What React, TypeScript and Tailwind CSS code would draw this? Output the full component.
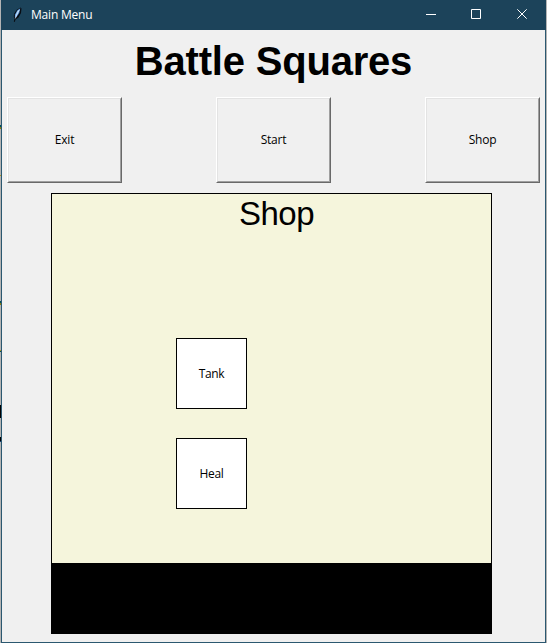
function Feather() {
  return (
    <svg width="9" height="16" viewBox="0 0 9 16" className="block">
      <path d="M7.5 .5 8.5 1.5 8 6 5.5 10.5 2.5 12.5 1.8 15 .8 14.5 1.5 12 .8 10 1 7 3.5 3Z" fill="#080c12" />
      <path d="M7.3 1.3 4.5 3.2 2 7.2 1.8 10.8 3.5 10 6.3 6Z" fill="#4d89ce" />
      <path d="M6.8 1.7 4.3 4.2 2.5 8 2.3 10.2 4.2 7Z" fill="#a9d2fa" />
      <path d="M6.3 3 4.2 7.2 2.2 11.5" fill="none" stroke="#e8f4ff" strokeWidth=".7" />
    </svg>
  );
}

function MenuButton({ label }: { label: string }) {
  return (
    <button className="h-[86px] w-[115px] border border-t-white border-l-white border-r-[#696969] border-b-[#696969]">
      <span className="flex h-full w-full items-center justify-center border border-t-[#e3e3e3] border-l-[#e3e3e3] border-r-[#a0a0a0] border-b-[#a0a0a0] tracking-[-0.2px]">
        {label}
      </span>
    </button>
  );
}

function ShopItem({ label }: { label: string }) {
  return (
    <button className="flex h-[71px] w-[71px] items-center justify-center border border-black bg-white tracking-[-0.3px]">
      {label}
    </button>
  );
}

function EdgeStrip() {
  return (
    <div className="h-full w-px shrink-0 bg-[#b4b4b4]">
      <div className="h-[125px]" />
      <div className="h-[2px] bg-[#00505a]" />
      <div className="h-[2px] bg-[#8a7a10]" />
      <div className="h-[46px]" />
      <div className="h-px bg-[#b09a20]" />
      <div className="h-[125px]" />
      <div className="h-[2px] bg-[#00505a]" />
      <div className="h-[2px] bg-[#8a7a10]" />
      <div className="h-[45px]" />
      <div className="h-px bg-[#b09a20]" />
      <div className="h-px bg-[#00505a]" />
      <div className="h-[53px]" />
      <div className="h-[13px] bg-black" />
      <div className="h-[19px]" />
      <div className="h-[4px] bg-black" />
      <div className="h-px bg-[#103c70]" />
    </div>
  );
}

export default function App() {
  return (
    <div className="flex h-[643px] w-[547px] overflow-hidden bg-[#b4b4b4] font-['Open_Sans','Noto_Sans',sans-serif] text-[12px] leading-4 text-black">
      <EdgeStrip />
      <div className="flex w-[545px] flex-col border-x border-b border-[#2b5870] bg-[#f0f0f0]">
        <header className="-mx-px flex h-[30px] shrink-0 items-center bg-[#1c435a] text-white">
          <div className="ml-[12px] w-[9px]"><Feather /></div>
          <span className="ml-[9px] tracking-[-0.2px]">Main Menu</span>
          <svg className="mr-[19px] mb-[2px] ml-auto" width="101" height="10" viewBox="0 0 101 10" fill="none" stroke="white">
            <path d="M0 5.5H10M45.5 .5H54.5V9.5H45.5ZM91.3 .3 100.7 9.7M100.7 .3 91.3 9.7" />
          </svg>
        </header>
        <h1 className="h-[67px] pt-[8px] text-center font-['Liberation_Sans',Arial,sans-serif] text-[40px] leading-[46px] font-bold tracking-[-0.2px]">
          Battle Squares
        </h1>
        <div className="flex justify-between px-[5px]">
          <MenuButton label="Exit" />
          <MenuButton label="Start" />
          <MenuButton label="Shop" />
        </div>
        <main className="mt-[10px] ml-[49px] flex h-[441px] w-[441px] flex-col border border-black bg-[#f5f5dc]">
          <h2 className="h-[144px] pr-px pl-[11px] text-center font-['Liberation_Sans',Arial,sans-serif] text-[33px] leading-[40px] tracking-[-0.5px]">
            Shop
          </h2>
          <div className="flex flex-1 flex-col gap-[29px] pl-[124px]">
            <ShopItem label="Tank" />
            <ShopItem label="Heal" />
          </div>
          <div className="h-[70px] bg-black" />
        </main>
      </div>
    </div>
  );
}
